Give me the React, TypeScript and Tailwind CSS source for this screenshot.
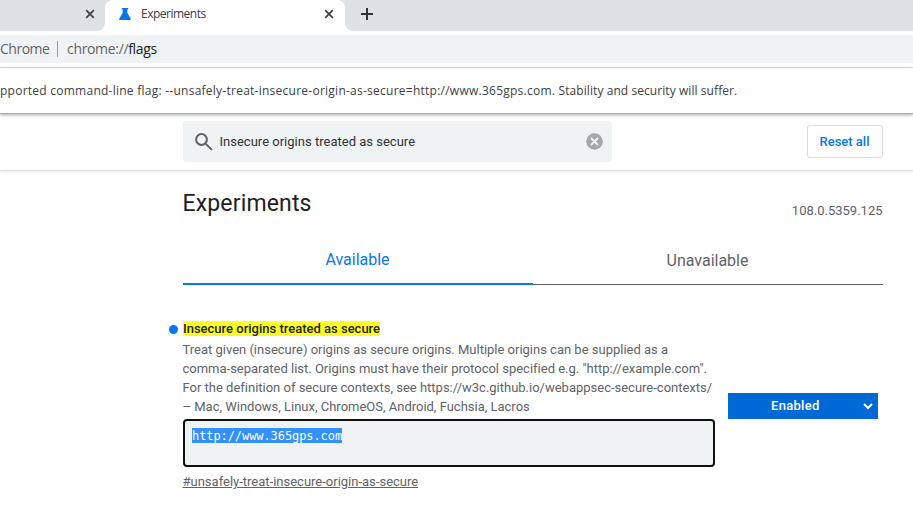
function CloseIcon() {
  return (
    <svg width="10" height="10" viewBox="0 0 10 10" fill="none" stroke="#3c4043" strokeWidth="1.7">
      <path d="M1.2 1.2 8.8 8.8M8.8 1.2 1.2 8.8" />
    </svg>
  );
}

function TabStrip() {
  return (
    <div className="flex h-[31px] bg-white font-['Open_Sans','Noto_Sans',sans-serif]">
      <div className="flex h-full w-[105px] items-start rounded-br-[8px] bg-[#dee1e6] pl-[85px] pt-[9px]">
        <CloseIcon />
      </div>
      <div className="h-full w-[240px] bg-[#dee1e6]">
        <div className="flex h-full items-start rounded-t-[8px] bg-white">
          <svg className="ml-[14px] mt-[8px] shrink-0" width="12" height="12" viewBox="0 0 12 12" fill="#0b75ea">
            <path d="M2.8 0h6.4v1.4H8.3v3.3l3.6 6.2q.3 1.1-.9 1.1H1Q-.2 12 .1 10.900L3.700 4.700V1.400H2.800z" />
          </svg>
          <span className="ml-[10px] mt-[6px] w-[66px] whitespace-nowrap text-[12px] leading-[16px] tracking-[-0.5px] text-[#3c4043]">
            Experiments
          </span>
          <div className="ml-[117px] mt-[9px]">
            <CloseIcon />
          </div>
        </div>
      </div>
      <div className="h-full flex-1 rounded-bl-[8px] bg-[#dee1e6] pl-[16px] pt-[8px]">
        <svg width="12" height="12" viewBox="0 0 12 12" stroke="#303236" strokeWidth="2">
          <path d="M6 0v12M0 6h12" />
        </svg>
      </div>
    </div>
  );
}

function Toolbar() {
  return (
    <div className="h-[37px] border-b border-[#dadce0] bg-white pt-[4px] font-['Open_Sans','Noto_Sans',sans-serif]">
      <div className="flex h-[28px] items-center whitespace-nowrap bg-[#eff3f4] text-[14px] leading-[20px]">
        <span className="w-[57px] tracking-[-0.5px] text-[#5f6368]">Chrome</span>
        <span className="h-[16px] w-px bg-[#9aa0a6]" />
        <span className="ml-[9px] tracking-[-0.33px] text-[#5f6368]">
          chrome://<span className="text-[#202124]">flags</span>
        </span>
      </div>
    </div>
  );
}

function InfoBar() {
  return (
    <div className="relative z-10 flex h-[46px] items-center whitespace-nowrap border-b border-[#a7abaa] bg-white font-['Open_Sans','Noto_Sans',sans-serif] text-[12px] leading-[16px] text-[#3c4043] shadow-[0_1px_3px_rgba(60,64,67,0.45)]">
      <p className="tracking-[0.250px]">
        pported command-line flag: --unsafely-treat-insecure-origin-as-secure=http://www.365gps.com.{" "}
        <span className="tracking-[0.070px]">Stability and security will suffer.</span>
      </p>
    </div>
  );
}

function SearchHeader() {
  return (
    <div className="flex h-[57px] items-start border-b border-[#e0e1e2] pl-[183px] shadow-[0_1px_3px_rgba(0,0,0,0.08)]">
      <div className="mt-[7px] flex h-[41px] w-[429px] items-center rounded-[3px] bg-[#eff3f4] pl-[12px] pr-[9.500px]">
        <svg width="18" height="18" viewBox="0 0 18 18" fill="none" stroke="#5f6368" strokeWidth="2">
          <circle cx="6.500" cy="6.500" r="5.400" />
          <path d="m10.600 10.600 6.300 6.300" />
        </svg>
        <span className="ml-[6.500px] flex-1 whitespace-nowrap text-[13px] leading-[20px] tracking-[0.010px] text-[#303236]">
          Insecure origins treated as secure
        </span>
        <svg width="17" height="17" viewBox="0 0 17 17">
          <circle cx="8.500" cy="8.500" r="8.300" fill="#a5a8aa" />
          <path d="m5 5 7 7m0-7-7 7" stroke="#eff3f4" strokeWidth="1.900" />
        </svg>
      </div>
      <button className="ml-[195px] mt-[11px] h-[33px] w-[76px] whitespace-nowrap rounded-[3px] border border-[#dadce0] pr-px text-[13px] font-medium text-[#0b75ea]">
        Reset all
      </button>
    </div>
  );
}

function Experiment() {
  return (
    <div className="mt-[34px] flex">
      <div className="w-[532px]">
        <div className="-ml-[14px] flex h-[19px] items-center">
          <span className="mr-[5px] mt-[2px] h-[9px] w-[9px] rounded-full bg-[#0b75ea]" />
          <span className="whitespace-nowrap bg-[#ffff20] text-[13px] font-medium leading-[15px] text-[#202124]">
            Insecure origins treated as secure
          </span>
        </div>
        <p className="-ml-[0.500px] mt-[2px] whitespace-nowrap text-[13px] leading-[19px] tracking-[-0.006px] text-[#5f6368]">
          Treat given (insecure) origins as secure origins. Multiple origins can be supplied as a<br />
          comma-separated list. Origins must have their protocol specified e.g. "http://example.com".<br />
          For the definition of secure contexts, see https://w3c.github.io/webappsec-secure-contexts/<br />
          – Mac, Windows, Linux, ChromeOS, Android, Fuchsia, Lacros
        </p>
        <div className="mt-[3px] h-[48px] rounded-[4px] border-2 border-[#101010] bg-[#eff3f4] pl-[7px] pt-[7px]">
          <span className="block h-[15px] w-[150px] whitespace-nowrap bg-[#3390ff] font-['DejaVu_Sans_Mono',monospace] text-[12px] leading-[17px] tracking-[-0.08px] text-white">
            http://www.365gps.com
          </span>
        </div>
        <a className="-ml-[0.500px] mt-[5px] block whitespace-nowrap text-[13px] leading-[19px] text-[#5f6368] underline">
          #unsafely-treat-insecure-origin-as-secure
        </a>
      </div>
      <button className="ml-[13px] mt-[74px] flex h-[26px] w-[150px] items-center bg-[#0069d6] pl-[43px] text-[13px] font-medium text-white">
        <span className="w-[92px] text-left tracking-[0.300px]">Enabled</span>
        <svg className="mt-[1px]" width="10" height="7" viewBox="0 0 10 7" fill="none" stroke="white" strokeWidth="2">
          <path d="m1 1 4 4 4-4" />
        </svg>
      </button>
    </div>
  );
}

export default function App() {
  return (
    <div className="h-[513px] w-[913px] overflow-hidden bg-white font-['Roboto',sans-serif]">
      <TabStrip />
      <Toolbar />
      <InfoBar />
      <SearchHeader />
      <main className="ml-[183px] w-[700px]">
        <div className="flex h-[64px] items-start justify-between pt-[19px]">
          <h1 className="-ml-[0.500px] text-[23px] leading-[28px] tracking-[0.150px] text-[#202124]">Experiments</h1>
          <span className="mr-[0.500px] mt-[11px] text-[13px] leading-[20px] text-[#5f6368]">108.0.5359.125</span>
        </div>
        <div className="flex h-[50px] text-[16px] leading-[20px]">
          <div className="flex w-[350px] justify-center border-b-2 border-[#0b75ea] pr-px pt-[15px] text-[#0b75ea]">
            Available
          </div>
          <div className="flex w-[350px] justify-center border-b border-[#5f6368] pr-px pt-[16px] text-[#5f6368]">
            Unavailable
          </div>
        </div>
        <Experiment />
      </main>
    </div>
  );
}
